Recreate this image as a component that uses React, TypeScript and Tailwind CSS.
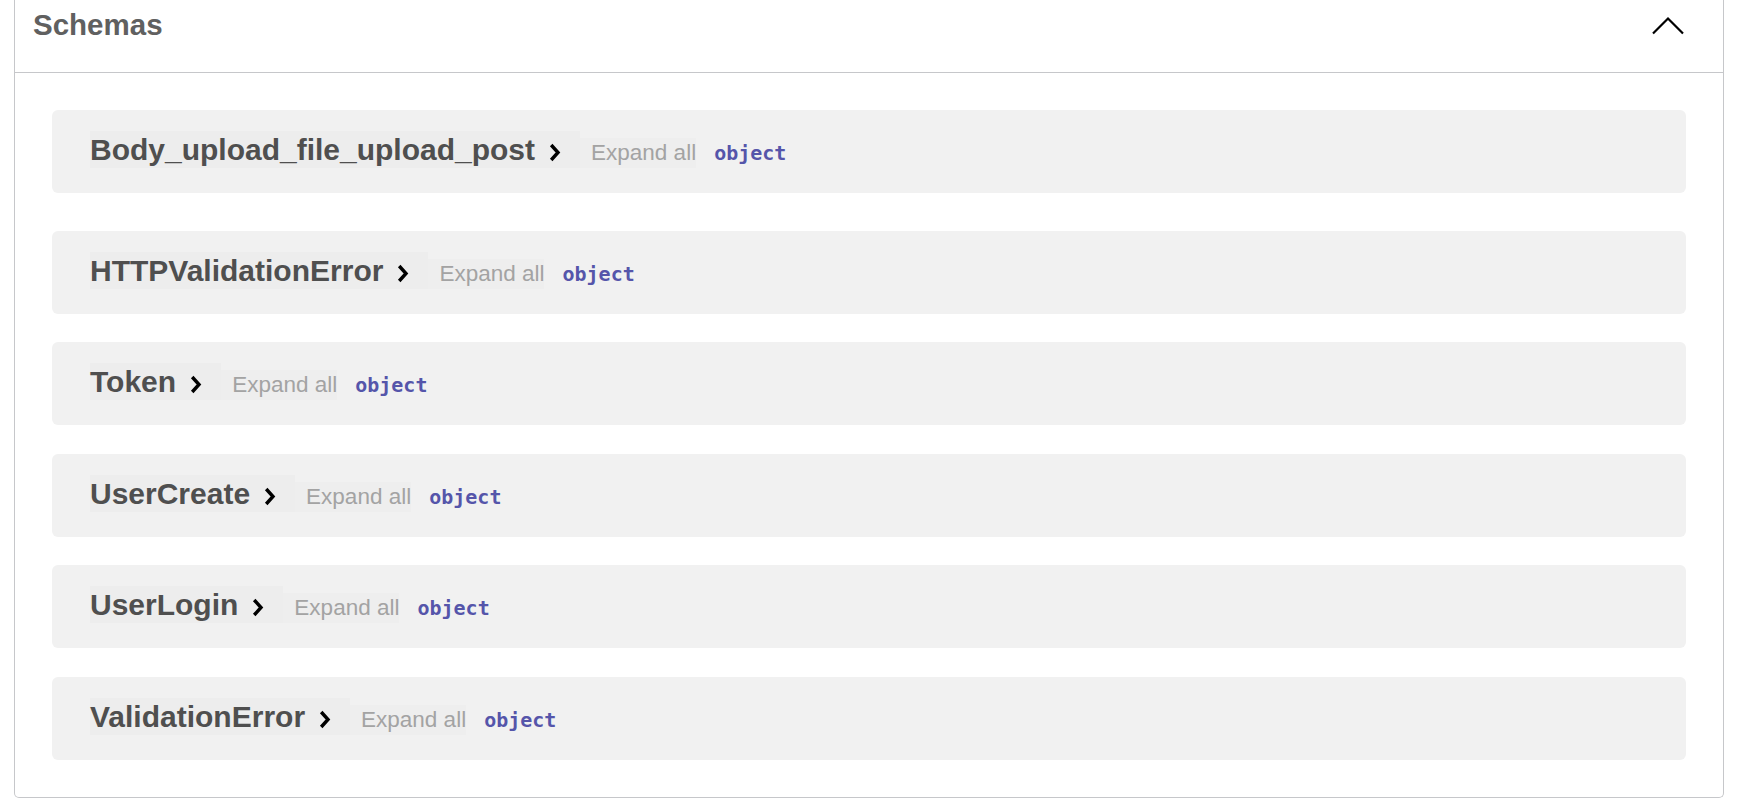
import React from "react";

const rows: { name: string; mb: string }[] = [
  { name: "Body_upload_file_upload_post", mb: "mb-[38px]" },
  { name: "HTTPValidationError", mb: "mb-[28px]" },
  { name: "Token", mb: "mb-[29px]" },
  { name: "UserCreate", mb: "mb-[28px]" },
  { name: "UserLogin", mb: "mb-[29px]" },
  { name: "ValidationError", mb: "mb-0" },
];

function Chevron() {
  return (
    <svg
      width="12"
      height="19"
      viewBox="0 0 12 19"
      className="inline ml-[14px]"
      fill="none"
      stroke="#000"
      strokeWidth="3.4"
    >
      <path d="M2.2 2 L9 9.5 L2.2 17" />
    </svg>
  );
}

export default function App() {
  return (
    <div className="w-[1742px] h-[801px] bg-white overflow-hidden">
      <div className="ml-[14px] w-[1710px] border border-t-0 border-[#c6c7ca] rounded-b-[5px]">
        <div className="h-[73px] border-b border-[#c6c7ca] flex justify-between items-start">
          <h4
            className="pl-[18px] pt-[8px] text-[29.5px] leading-[34px] font-bold text-[#606060]"
            style={{ fontFamily: '"Liberation Sans", Arial, sans-serif' }}
          >
            Schemas
          </h4>
          <svg
            width="34"
            height="19"
            viewBox="0 0 34 19"
            className="mt-[16px] mr-[38px]"
            fill="none"
            stroke="#000"
            strokeWidth="2.2"
          >
            <path d="M2 17.5 L17 2.5 L32 17.5" />
          </svg>
        </div>
        <div className="pt-[37px] pb-[37px] pl-[37px] pr-[37px]">
          {rows.map((r) => (
            <div
              key={r.name}
              className={`h-[83px] bg-[#f1f1f1] rounded-[6px] flex items-center pl-[38px] pb-[4px] ${r.mb}`}
              style={{ fontFamily: '"Liberation Sans", Arial, sans-serif' }}
            >
              <div className="flex items-baseline">
                <span className="inline-block bg-[#ededed] text-[30px] leading-[37px] font-bold text-[#4f4f4f] pr-[19px] whitespace-nowrap">
                  {r.name}
                  <Chevron />
                </span>
                <span className="inline-block bg-[#eeeeee] text-[22.5px] leading-[30px] text-[#a3a3a3] pl-[11px] whitespace-nowrap">
                  Expand all
                </span>
                <span
                  className="ml-[18px] text-[20px] font-bold text-[#5555aa]"
                  style={{ fontFamily: '"DejaVu Sans Mono", "Liberation Mono", monospace' }}
                >
                  object
                </span>
              </div>
            </div>
          ))}
        </div>
      </div>
    </div>
  );
}
